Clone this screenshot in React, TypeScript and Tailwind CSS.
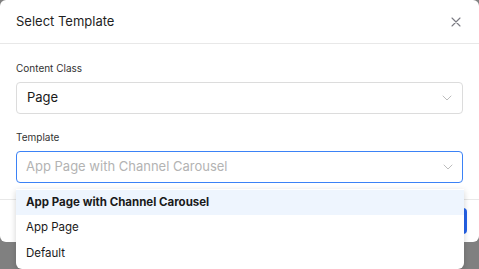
import React from "react";

const Chevron: React.FC = () => (
  <svg width="10" height="6" viewBox="0 0 10 6" fill="none" className="shrink-0">
    <path d="M1 1l4 4 4-4" stroke="#bdbdbd" strokeWidth="1" strokeLinecap="round" strokeLinejoin="round" />
  </svg>
);

export default function App() {
  const options = ["App Page with Channel Carousel", "App Page", "Default"];

  return (
    <div
      className="relative w-[479px] h-[269px] overflow-hidden bg-[#808080]"
      style={{ fontFamily: "Inter, 'Noto Sans', sans-serif" }}
    >
      {/* Modal */}
      <div className="w-[479px] h-[242px] bg-white rounded-md flex flex-col">
        <div className="h-[44px] px-4 flex items-center justify-between border-b border-[#e8e8e8]">
          <h2 className="text-[13px] text-[#1f1f1f]">Select Template</h2>
          <svg width="10" height="10" viewBox="0 0 10 10" className="mr-[2px]">
            <path d="M1 1l8 8M9 1l-8 8" stroke="#7a7a82" strokeWidth="1.1" strokeLinecap="round" />
          </svg>
        </div>

        <div className="px-4 pt-[17px]">
          <div className="text-[10px] leading-[14px] text-[#333]">Content Class</div>
          <div className="mt-[7px] h-[32px] border border-[#dcdcdc] rounded-[4px] px-[10px] flex items-center justify-between">
            <span className="text-[13px] text-[#1a1a1a]">Page</span>
            <Chevron />
          </div>

          <div className="mt-[16px] text-[10px] leading-[14px] text-[#333]">Template</div>
          <div className="mt-[7px] h-[32px] border-[1.5px] border-[#3b82f6] rounded-[4px] px-[9px] flex items-center justify-between">
            <span className="text-[13px] text-[#b3b3b3]">App Page with Channel Carousel</span>
            <Chevron />
          </div>
        </div>

        <div className="mt-[16px] flex-1 border-t border-[#e8e8e8] flex items-start justify-end pr-[12px] pt-[8px]">
          <div className="h-[26px] w-[60px] rounded-[4px] bg-[#2563eb]" />
        </div>
      </div>

      {/* Dropdown menu */}
      <div className="absolute left-[16px] top-[189px] w-[448px] bg-white rounded-b-md shadow-[0_2px_6px_rgba(0,0,0,0.18)] pt-[1px] pb-[3px]">
        {options.map((o, i) => (
          <div
            key={o}
            className={
              i === 0
                ? "h-[25px] px-[10px] flex items-center bg-[#eef5fe] text-[11.5px] font-bold text-[#1a1a1a]"
                : "h-[25.5px] px-[10px] flex items-center text-[11.5px] text-[#1a1a1a]"
            }
          >
            {o}
          </div>
        ))}
      </div>
    </div>
  );
}
